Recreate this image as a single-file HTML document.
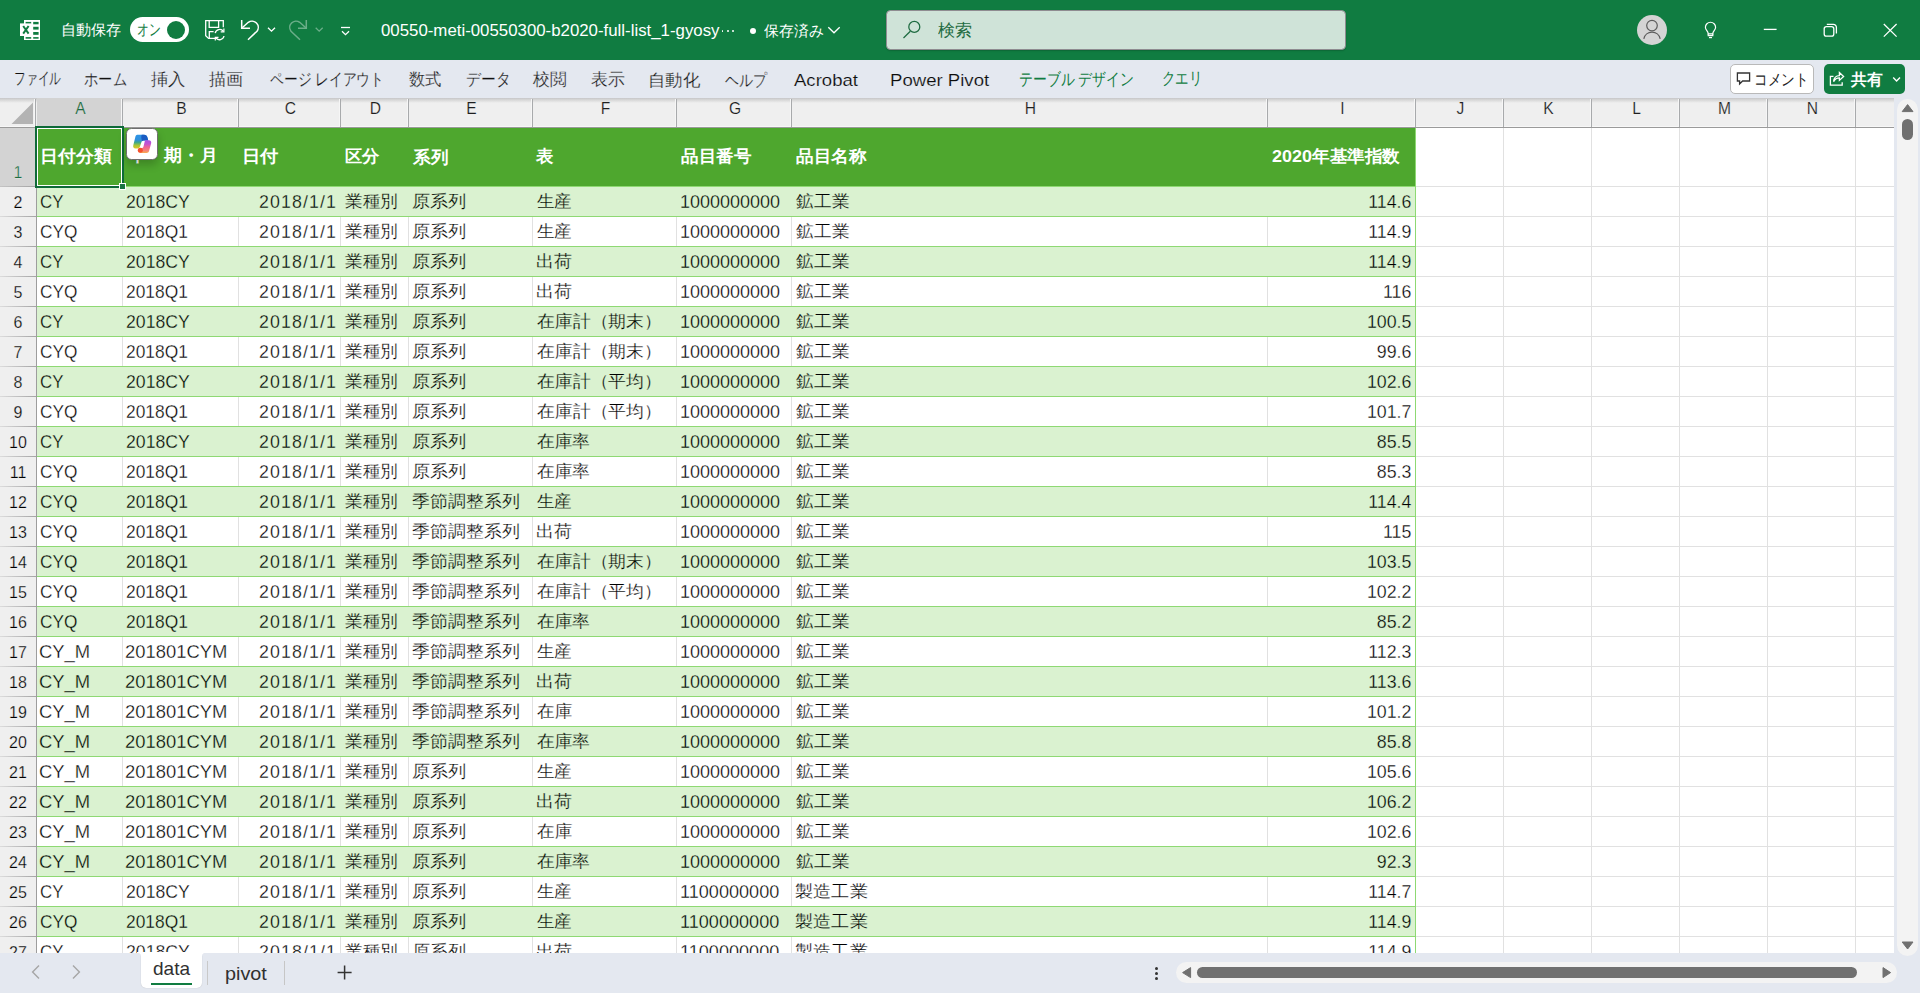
<!DOCTYPE html>
<html lang="ja"><head><meta charset="utf-8"><title>Excel</title>
<style>
html,body{margin:0;padding:0}
body{width:1920px;height:993px;overflow:hidden;position:relative;background:#fff;font-family:"Liberation Sans",sans-serif;color:#111}
div,span,svg{position:absolute;box-sizing:border-box}
.t{white-space:nowrap;line-height:1;transform-origin:0 50%}
#title{left:0;top:0;width:1920px;height:60px;background:#107c41}
#rib{left:0;top:60px;width:1920px;height:38px;background:#e4e8f0}
.tab{font-size:16.5px;color:#111;-webkit-text-stroke:.22px #e4e8f0}
.tab.g{color:#107c41;-webkit-text-stroke-width:0}
#sheet{left:0;top:98px;width:1894px;height:855px;background:#fff;overflow:hidden}
#colhdr{left:0;top:0;width:1894px;height:30px;background:#efefef;border-bottom:1px solid #9a9a9a}
.ch{top:0;height:29px;line-height:22px;text-align:center;font-size:15.6px;color:#000;-webkit-text-stroke:.15px #efefef;padding-left:2px}
.chl{top:1px;width:1px;height:28px;background:#a8aaac;box-shadow:-1px 0 0 #f6f6f6}
#rowhdr{left:0;top:30px;width:37px;height:825px;background:#efefef;border-right:1px solid #9d9d9d}
.rh{left:0;width:36px;height:30px;text-align:center;font-size:16px;color:#000;-webkit-text-stroke:.25px #efefef;line-height:31px;background:linear-gradient(90deg,#dcdcdc,#a4a4a4) bottom/100% 1px no-repeat}
.vl{width:1px;background:#e1e1e1}
.hl{height:1px;background:#e1e1e1}
.band{background:#daf2d0}
.tl{height:1px;background:#8ed973}
.c{font-size:17.8px;color:#000;-webkit-text-stroke:.3px #fff}
.c.bd{-webkit-text-stroke-color:#daf2d0}
.c.j{font-size:17px;color:#000;-webkit-text-stroke-width:.22px}
.h{font-weight:bold;color:#fff;font-size:17.4px}
#bot{left:0;top:953px;width:1920px;height:40px;background:#e4e8f0}
#vsb{left:1894px;top:98px;width:26px;height:860px;background:#e4e8f0;z-index:3}
</style></head><body>
<div id="title"><svg style="left:18px;top:18px" width="24" height="24" viewBox="18 18 24 24">
<rect x="24" y="20" width="16" height="20" fill="#fff"/>
<g fill="#107c41">
<rect x="25.6" y="21.9" width="5.6" height="2.4"/><rect x="33.2" y="21.9" width="5.4" height="2.4"/>
<rect x="33.2" y="26.8" width="5.4" height="2.8"/>
<rect x="33.2" y="32" width="5.4" height="2.8"/>
<rect x="25.6" y="37.1" width="5.6" height="1.6"/><rect x="33.2" y="37.1" width="5.4" height="1.6"/>
</g>
<rect x="20" y="23.4" width="11.8" height="12.6" fill="#fff"/>
<path d="M23.2 26 L28.6 33.6 M28.6 26 L23.2 33.6" stroke="#107c41" stroke-width="2" fill="none"/>
</svg><span class="t " style="left:60.78px;top:23.48px;transform:scaleX(1.0088);font-size:14.67px;color:#fff;width:60.02px;text-align-last:justify">自動保存</span><div style="left:130px;top:17px;width:59px;height:25px;border-radius:13px;background:#fff"></div><span class="t " style="left:136.59px;top:22.31px;transform:scaleX(0.7395);font-size:15.6px;color:#107c41;width:32.02px;text-align-last:justify">オン</span><div style="left:167px;top:21px;width:18px;height:18px;border-radius:9px;background:#107c41"></div><svg style="left:203px;top:18px" width="24" height="24" viewBox="203 18 24 24" fill="none" stroke="#fff" stroke-width="1.3">
<path d="M217.5 38.4 H208.6 L205.7 35.6 V20.7 H223.3 V27.2"/>
<path d="M209.2 20.7 V27.3 H218.6 V20.7"/>
<path d="M209.3 38.2 V31.6 H213.6"/>
<path d="M215.2 33.2 A4.6 4.6 0 0 1 223.4 31.3" /><path d="M223.9 28.6 V31.8 H220.7" stroke-width="1.2"/>
<path d="M224 36 A4.6 4.6 0 0 1 215.8 37.9" /><path d="M215.3 40.4 V37.3 H218.5" stroke-width="1.2"/>
</svg><svg style="left:238px;top:17px" width="40" height="26" viewBox="238 17 40 26" fill="none" stroke="#fff" stroke-width="1.5">
<path d="M241.7 20 V28.2 H250"/>
<path d="M242.2 27.7 L248.3 22.3 A6.3 6.3 0 0 1 257 31.2 L248 39.7"/>
<path d="M268 27.7 L271.5 31.2 L275 27.7" stroke-width="1.3"/>
</svg><svg style="left:286px;top:17px;opacity:.38" width="40" height="26" viewBox="286 17 40 26" fill="none" stroke="#fff" stroke-width="1.5">
<path d="M306.3 20 V28.2 H298"/>
<path d="M305.8 27.7 L299.7 22.3 A6.3 6.3 0 0 0 291 31.2 L300 39.7"/>
<path d="M315.7 27.7 L319.2 31.2 L322.7 27.7" stroke-width="1.3"/>
</svg><svg style="left:338px;top:22px" width="16" height="16" viewBox="338 22 16 16" fill="none" stroke="#fff" stroke-width="1.3">
<path d="M341 27.5 H350"/><path d="M342 31.2 L345.5 34.6 L349 31.2"/></svg><span class="t " style="left:381.15px;top:22.35px;transform:scaleX(1.0262);font-size:16.4px;color:#fff">00550-meti-00550300-b2020-full-list_1-gyosy</span><div style="left:721.55px;top:30px;width:1.9px;height:1.9px;border-radius:1px;background:#fff"></div><div style="left:726.65px;top:30px;width:1.9px;height:1.9px;border-radius:1px;background:#fff"></div><div style="left:731.75px;top:30px;width:1.9px;height:1.9px;border-radius:1px;background:#fff"></div><div style="left:750px;top:28px;width:6px;height:6px;border-radius:3px;background:#fff"></div><span class="t " style="left:763.63px;top:24.03px;transform:scaleX(0.9924);font-size:14.67px;color:#fff;width:60.02px;text-align-last:justify">保存済み</span><svg style="left:826px;top:24px" width="16" height="12" viewBox="826 24 16 12" fill="none" stroke="#fff" stroke-width="1.3"><path d="M828.3 27.2 L834 32.8 L839.7 27.2"/></svg><div style="left:886px;top:10px;width:460px;height:40px;border-radius:4.5px;background:#cfe3d8;border:1px solid #8f8c91;box-shadow:0 1px 1.5px rgba(0,0,0,.18)"></div><svg style="left:900px;top:18px" width="24" height="24" viewBox="900 18 24 24" fill="none" stroke="#1e6b41" stroke-width="1.25"><circle cx="914.3" cy="26.9" r="5.5"/><path d="M910.3 31.2 L903.5 38"/></svg><span class="t " style="left:938.1px;top:22.5px;transform:scaleX(1.0027);font-size:16.6px;color:#1e6b41;width:34.02px;text-align-last:justify">検索</span><svg style="left:1636px;top:14px" width="32" height="32" viewBox="1636 14 32 32"><circle cx="1652" cy="30" r="15" fill="#d4d4d4"/>
<g fill="none" stroke="#5c5c5c" stroke-width="1.2"><circle cx="1652" cy="25.6" r="5.3"/><path d="M1643.8 38.8 A8.4 8.4 0 0 1 1660.2 38.8"/></g></svg><svg style="left:1700px;top:18px" width="22" height="24" viewBox="1700 18 22 24" fill="none" stroke="#fff" stroke-width="1.2">
<path d="M1708.2 33.8 C1708.2 31 1705.4 30.3 1705.4 27.3 A5.1 5.1 0 0 1 1715.6 27.3 C1715.6 30.3 1712.8 31 1712.8 33.8 Z"/>
<path d="M1708.2 33.8 V35.7 H1712.8 V33.8"/><path d="M1709 37.6 H1712"/></svg><svg style="left:1760px;top:20px" width="20" height="20" viewBox="1760 20 20 20" stroke="#fff" stroke-width="1.3"><path d="M1763.8 29.4 H1776.6"/></svg><svg style="left:1820px;top:20px" width="20" height="20" viewBox="1820 20 20 20" fill="none" stroke="#fff" stroke-width="1.3">
<rect x="1824.2" y="26.6" width="9.6" height="9.6" rx="2.2"/><path d="M1826.8 24.4 H1833.4 A3 3 0 0 1 1836.4 27.4 V33.6"/></svg><svg style="left:1880px;top:20px" width="20" height="20" viewBox="1880 20 20 20" stroke="#fff" stroke-width="1.3"><path d="M1883.8 24 L1896.6 36.6 M1896.6 24 L1883.8 36.6"/></svg></div>
<div id="rib"><span class="t tab" style="left:13.57px;top:10.38px;transform:scaleX(0.6926);width:68.02px;text-align-last:justify">ファイル</span><span class="t tab" style="left:83.86px;top:10.97px;transform:scaleX(0.8384);width:51.02px;text-align-last:justify">ホーム</span><span class="t tab" style="left:151.19px;top:11.39px;transform:scaleX(1.0212);width:34.02px;text-align-last:justify">挿入</span><span class="t tab" style="left:209.35px;top:11.39px;transform:scaleX(1.0021);width:34.02px;text-align-last:justify">描画</span><span class="t tab" style="left:269.81px;top:10.69px;transform:scaleX(0.8106);width:140.61px;text-align-last:justify">ページ レイアウト</span><span class="t tab" style="left:408.89px;top:11.28px;transform:scaleX(0.9603);width:34.02px;text-align-last:justify">数式</span><span class="t tab" style="left:466.27px;top:11.0px;transform:scaleX(0.8716);width:51.02px;text-align-last:justify">データ</span><span class="t tab" style="left:533.18px;top:11.14px;transform:scaleX(0.9915);width:34.02px;text-align-last:justify">校閲</span><span class="t tab" style="left:590.74px;top:11.15px;transform:scaleX(0.994);width:34.02px;text-align-last:justify">表示</span><span class="t tab" style="left:647.81px;top:11.58px;transform:scaleX(1.0217);width:51.02px;text-align-last:justify">自動化</span><span class="t tab" style="left:724.89px;top:11.89px;transform:scaleX(0.8222);width:51.02px;text-align-last:justify">ヘルプ</span><span class="t tab" style="left:794.44px;top:11.65px;transform:scaleX(1.091);font-size:17px;color:#0c0c0c;-webkit-text-stroke-width:.16px">Acrobat</span><span class="t tab" style="left:890.22px;top:11.65px;transform:scaleX(1.0929);font-size:17px;color:#0c0c0c;-webkit-text-stroke-width:.16px">Power Pivot</span><span class="t tab g" style="left:1019.27px;top:11.27px;transform:scaleX(0.8145);width:140.61px;text-align-last:justify">テーブル デザイン</span><span class="t tab g" style="left:1161.89px;top:10.37px;transform:scaleX(0.7881);width:51.02px;text-align-last:justify">クエリ</span><div style="left:1730px;top:4px;width:84px;height:30px;border-radius:5px;background:#fff;border:1px solid #b9b9b9"></div><svg style="left:1734px;top:10px" width="20" height="18" viewBox="1734 70 20 18" fill="none" stroke="#333" stroke-width="1.3"><path d="M1737.4 73 H1749.6 V81 H1742.6 L1739.6 84 V81 H1737.4 Z"/></svg><span class="t " style="left:1753.83px;top:11.67px;transform:scaleX(0.8489);font-size:16px;color:#242424;width:64.02px;text-align-last:justify">コメント</span><div style="left:1824px;top:4px;width:81px;height:30px;border-radius:5px;background:#107c41"></div><svg style="left:1827px;top:9px" width="20" height="20" viewBox="1827 69 20 20" fill="none" stroke="#fff" stroke-width="1.3">
<path d="M1833.5 76.3 H1830.4 V85.2 H1842.2 V82.2"/>
<path d="M1833.6 81.6 C1834 77.6 1836.6 75.6 1839.4 75.6 V72.6 L1843.6 76.6 L1839.4 80.4 V77.9 C1837 77.9 1835 79 1833.6 81.6 Z"/></svg><span class="t " style="left:1850.7px;top:11.92px;transform:scaleX(0.9845);font-size:16px;font-weight:bold;color:#fff;width:32.02px;text-align-last:justify">共有</span><svg style="left:1890px;top:14px" width="14" height="10" viewBox="1890 74 14 10" fill="none" stroke="#fff" stroke-width="1.4"><path d="M1893.2 77.6 L1896.6 81 L1900 77.6"/></svg></div>
<div id="sheet"><div class="vl" style="left:122px;top:30px;height:825px"></div><div class="vl" style="left:238px;top:30px;height:825px"></div><div class="vl" style="left:340px;top:30px;height:825px"></div><div class="vl" style="left:408px;top:30px;height:825px"></div><div class="vl" style="left:532px;top:30px;height:825px"></div><div class="vl" style="left:676px;top:30px;height:825px"></div><div class="vl" style="left:791px;top:30px;height:825px"></div><div class="vl" style="left:1267px;top:30px;height:825px"></div><div class="vl" style="left:1415px;top:30px;height:825px"></div><div class="vl" style="left:1503px;top:30px;height:825px"></div><div class="vl" style="left:1591px;top:30px;height:825px"></div><div class="vl" style="left:1679px;top:30px;height:825px"></div><div class="vl" style="left:1767px;top:30px;height:825px"></div><div class="vl" style="left:1855px;top:30px;height:825px"></div><div class="hl" style="left:37px;top:88px;width:1857px"></div><div class="hl" style="left:37px;top:118px;width:1857px"></div><div class="hl" style="left:37px;top:148px;width:1857px"></div><div class="hl" style="left:37px;top:178px;width:1857px"></div><div class="hl" style="left:37px;top:208px;width:1857px"></div><div class="hl" style="left:37px;top:238px;width:1857px"></div><div class="hl" style="left:37px;top:268px;width:1857px"></div><div class="hl" style="left:37px;top:298px;width:1857px"></div><div class="hl" style="left:37px;top:328px;width:1857px"></div><div class="hl" style="left:37px;top:358px;width:1857px"></div><div class="hl" style="left:37px;top:388px;width:1857px"></div><div class="hl" style="left:37px;top:418px;width:1857px"></div><div class="hl" style="left:37px;top:448px;width:1857px"></div><div class="hl" style="left:37px;top:478px;width:1857px"></div><div class="hl" style="left:37px;top:508px;width:1857px"></div><div class="hl" style="left:37px;top:538px;width:1857px"></div><div class="hl" style="left:37px;top:568px;width:1857px"></div><div class="hl" style="left:37px;top:598px;width:1857px"></div><div class="hl" style="left:37px;top:628px;width:1857px"></div><div class="hl" style="left:37px;top:658px;width:1857px"></div><div class="hl" style="left:37px;top:688px;width:1857px"></div><div class="hl" style="left:37px;top:718px;width:1857px"></div><div class="hl" style="left:37px;top:748px;width:1857px"></div><div class="hl" style="left:37px;top:778px;width:1857px"></div><div class="hl" style="left:37px;top:808px;width:1857px"></div><div class="hl" style="left:37px;top:838px;width:1857px"></div><div class="hl" style="left:37px;top:868px;width:1857px"></div><div style="left:37px;top:30px;width:1379px;height:58px;background:#4ea72e"></div><div style="left:1415px;top:30px;width:1px;height:825px;background:#8ed973"></div><div class="tl" style="left:37px;top:88px;width:1379px"></div><div class="band" style="left:37px;top:89px;width:1378px;height:29px"></div><div class="tl" style="left:37px;top:118px;width:1379px"></div><div class="tl" style="left:37px;top:148px;width:1379px"></div><div class="band" style="left:37px;top:149px;width:1378px;height:29px"></div><div class="tl" style="left:37px;top:178px;width:1379px"></div><div class="tl" style="left:37px;top:208px;width:1379px"></div><div class="band" style="left:37px;top:209px;width:1378px;height:29px"></div><div class="tl" style="left:37px;top:238px;width:1379px"></div><div class="tl" style="left:37px;top:268px;width:1379px"></div><div class="band" style="left:37px;top:269px;width:1378px;height:29px"></div><div class="tl" style="left:37px;top:298px;width:1379px"></div><div class="tl" style="left:37px;top:328px;width:1379px"></div><div class="band" style="left:37px;top:329px;width:1378px;height:29px"></div><div class="tl" style="left:37px;top:358px;width:1379px"></div><div class="tl" style="left:37px;top:388px;width:1379px"></div><div class="band" style="left:37px;top:389px;width:1378px;height:29px"></div><div class="tl" style="left:37px;top:418px;width:1379px"></div><div class="tl" style="left:37px;top:448px;width:1379px"></div><div class="band" style="left:37px;top:449px;width:1378px;height:29px"></div><div class="tl" style="left:37px;top:478px;width:1379px"></div><div class="tl" style="left:37px;top:508px;width:1379px"></div><div class="band" style="left:37px;top:509px;width:1378px;height:29px"></div><div class="tl" style="left:37px;top:538px;width:1379px"></div><div class="tl" style="left:37px;top:568px;width:1379px"></div><div class="band" style="left:37px;top:569px;width:1378px;height:29px"></div><div class="tl" style="left:37px;top:598px;width:1379px"></div><div class="tl" style="left:37px;top:628px;width:1379px"></div><div class="band" style="left:37px;top:629px;width:1378px;height:29px"></div><div class="tl" style="left:37px;top:658px;width:1379px"></div><div class="tl" style="left:37px;top:688px;width:1379px"></div><div class="band" style="left:37px;top:689px;width:1378px;height:29px"></div><div class="tl" style="left:37px;top:718px;width:1379px"></div><div class="tl" style="left:37px;top:748px;width:1379px"></div><div class="band" style="left:37px;top:749px;width:1378px;height:29px"></div><div class="tl" style="left:37px;top:778px;width:1379px"></div><div class="tl" style="left:37px;top:808px;width:1379px"></div><div class="band" style="left:37px;top:809px;width:1378px;height:29px"></div><div class="tl" style="left:37px;top:838px;width:1379px"></div><div class="tl" style="left:37px;top:868px;width:1379px"></div><span class="t h" style="left:39.9px;top:49.86px;transform:scaleX(1.0509);width:68.02px;text-align-last:justify">日付分類</span><span class="t h" style="left:127.54px;top:49.43px;transform:scaleX(1.0523);width:85.02px;text-align-last:justify">年・期・月</span><span class="t h" style="left:242.31px;top:49.98px;transform:scaleX(1.0748);width:34.02px;text-align-last:justify">日付</span><span class="t h" style="left:344.72px;top:50.17px;transform:scaleX(1.0106);width:34.02px;text-align-last:justify">区分</span><span class="t h" style="left:412.76px;top:50.67px;transform:scaleX(1.0333);width:34.02px;text-align-last:justify">系列</span><span class="t h" style="left:536.35px;top:50.23px;transform:scaleX(1.0177);">表</span><span class="t h" style="left:680.91px;top:50.11px;transform:scaleX(1.0312);width:68.02px;text-align-last:justify">品目番号</span><span class="t h" style="left:796.18px;top:49.88px;transform:scaleX(1.0355);width:68.02px;text-align-last:justify">品目名称</span><span class="t h" style="left:1271.95px;top:49.63px;transform:scaleX(1.0339);width:123.71px;text-align-last:justify">2020年基準指数</span><span class="t c bd" style="left:39.77px;top:95.6px;transform:scaleX(0.9478);">CY</span><span class="t c bd" style="left:126.07px;top:95.6px;transform:scaleX(0.9923);">2018CY</span><span class="t c bd" style="left:258.99px;top:95.6px;letter-spacing:1.109px;">2018/1/1</span><span class="t c j bd" style="left:345.16px;top:94.91px;transform:scaleX(1.0402);width:51.02px;text-align-last:justify">業種別</span><span class="t c j bd" style="left:412.06px;top:94.91px;transform:scaleX(1.0695);width:51.02px;text-align-last:justify">原系列</span><span class="t c j bd" style="left:537.12px;top:94.91px;transform:scaleX(1.0284);width:34.02px;text-align-last:justify">生産</span><span class="t c bd" style="left:679.79px;top:95.6px;transform:scaleX(1.0116);">1000000000</span><span class="t c j bd" style="left:795.6px;top:94.91px;transform:scaleX(1.0442);width:51.02px;text-align-last:justify">鉱工業</span><span class="t c bd" style="right:482.6px;top:95.6px;transform-origin:100% 50%">114.6</span><span class="t c" style="left:39.97px;top:125.6px;transform:scaleX(0.97);">CYQ</span><span class="t c" style="left:125.73px;top:125.6px;transform:scaleX(0.9779);">2018Q1</span><span class="t c" style="left:258.99px;top:125.6px;letter-spacing:1.109px;">2018/1/1</span><span class="t c j" style="left:345.16px;top:124.91px;transform:scaleX(1.0402);width:51.02px;text-align-last:justify">業種別</span><span class="t c j" style="left:412.06px;top:124.91px;transform:scaleX(1.0695);width:51.02px;text-align-last:justify">原系列</span><span class="t c j" style="left:537.12px;top:124.91px;transform:scaleX(1.0284);width:34.02px;text-align-last:justify">生産</span><span class="t c" style="left:679.79px;top:125.6px;transform:scaleX(1.0116);">1000000000</span><span class="t c j" style="left:795.6px;top:124.91px;transform:scaleX(1.0442);width:51.02px;text-align-last:justify">鉱工業</span><span class="t c" style="right:482.6px;top:125.6px;transform-origin:100% 50%">114.9</span><span class="t c bd" style="left:39.77px;top:155.6px;transform:scaleX(0.9478);">CY</span><span class="t c bd" style="left:126.07px;top:155.6px;transform:scaleX(0.9923);">2018CY</span><span class="t c bd" style="left:258.99px;top:155.6px;letter-spacing:1.109px;">2018/1/1</span><span class="t c j bd" style="left:345.16px;top:154.91px;transform:scaleX(1.0402);width:51.02px;text-align-last:justify">業種別</span><span class="t c j bd" style="left:412.06px;top:154.91px;transform:scaleX(1.0695);width:51.02px;text-align-last:justify">原系列</span><span class="t c j bd" style="left:536.44px;top:154.91px;transform:scaleX(1.0618);width:34.02px;text-align-last:justify">出荷</span><span class="t c bd" style="left:679.79px;top:155.6px;transform:scaleX(1.0116);">1000000000</span><span class="t c j bd" style="left:795.6px;top:154.91px;transform:scaleX(1.0442);width:51.02px;text-align-last:justify">鉱工業</span><span class="t c bd" style="right:482.6px;top:155.6px;transform-origin:100% 50%">114.9</span><span class="t c" style="left:39.97px;top:185.6px;transform:scaleX(0.97);">CYQ</span><span class="t c" style="left:125.73px;top:185.6px;transform:scaleX(0.9779);">2018Q1</span><span class="t c" style="left:258.99px;top:185.6px;letter-spacing:1.109px;">2018/1/1</span><span class="t c j" style="left:345.16px;top:184.91px;transform:scaleX(1.0402);width:51.02px;text-align-last:justify">業種別</span><span class="t c j" style="left:412.06px;top:184.91px;transform:scaleX(1.0695);width:51.02px;text-align-last:justify">原系列</span><span class="t c j" style="left:536.44px;top:184.91px;transform:scaleX(1.0618);width:34.02px;text-align-last:justify">出荷</span><span class="t c" style="left:679.79px;top:185.6px;transform:scaleX(1.0116);">1000000000</span><span class="t c j" style="left:795.6px;top:184.91px;transform:scaleX(1.0442);width:51.02px;text-align-last:justify">鉱工業</span><span class="t c" style="right:482.6px;top:185.6px;transform-origin:100% 50%">116</span><span class="t c bd" style="left:39.77px;top:215.6px;transform:scaleX(0.9478);">CY</span><span class="t c bd" style="left:126.07px;top:215.6px;transform:scaleX(0.9923);">2018CY</span><span class="t c bd" style="left:258.99px;top:215.6px;letter-spacing:1.109px;">2018/1/1</span><span class="t c j bd" style="left:345.16px;top:214.91px;transform:scaleX(1.0402);width:51.02px;text-align-last:justify">業種別</span><span class="t c j bd" style="left:412.06px;top:214.91px;transform:scaleX(1.0695);width:51.02px;text-align-last:justify">原系列</span><span class="t c j bd" style="left:536.55px;top:214.91px;transform:scaleX(1.0493);width:119.02px;text-align-last:justify">在庫計（期末）</span><span class="t c bd" style="left:679.79px;top:215.6px;transform:scaleX(1.0116);">1000000000</span><span class="t c j bd" style="left:795.6px;top:214.91px;transform:scaleX(1.0442);width:51.02px;text-align-last:justify">鉱工業</span><span class="t c bd" style="right:482.6px;top:215.6px;transform-origin:100% 50%">100.5</span><span class="t c" style="left:39.97px;top:245.6px;transform:scaleX(0.97);">CYQ</span><span class="t c" style="left:125.73px;top:245.6px;transform:scaleX(0.9779);">2018Q1</span><span class="t c" style="left:258.99px;top:245.6px;letter-spacing:1.109px;">2018/1/1</span><span class="t c j" style="left:345.16px;top:244.91px;transform:scaleX(1.0402);width:51.02px;text-align-last:justify">業種別</span><span class="t c j" style="left:412.06px;top:244.91px;transform:scaleX(1.0695);width:51.02px;text-align-last:justify">原系列</span><span class="t c j" style="left:536.55px;top:244.91px;transform:scaleX(1.0493);width:119.02px;text-align-last:justify">在庫計（期末）</span><span class="t c" style="left:679.79px;top:245.6px;transform:scaleX(1.0116);">1000000000</span><span class="t c j" style="left:795.6px;top:244.91px;transform:scaleX(1.0442);width:51.02px;text-align-last:justify">鉱工業</span><span class="t c" style="right:482.6px;top:245.6px;transform-origin:100% 50%">99.6</span><span class="t c bd" style="left:39.77px;top:275.6px;transform:scaleX(0.9478);">CY</span><span class="t c bd" style="left:126.07px;top:275.6px;transform:scaleX(0.9923);">2018CY</span><span class="t c bd" style="left:258.99px;top:275.6px;letter-spacing:1.109px;">2018/1/1</span><span class="t c j bd" style="left:345.16px;top:274.91px;transform:scaleX(1.0402);width:51.02px;text-align-last:justify">業種別</span><span class="t c j bd" style="left:412.06px;top:274.91px;transform:scaleX(1.0695);width:51.02px;text-align-last:justify">原系列</span><span class="t c j bd" style="left:536.55px;top:274.91px;transform:scaleX(1.0493);width:119.02px;text-align-last:justify">在庫計（平均）</span><span class="t c bd" style="left:679.79px;top:275.6px;transform:scaleX(1.0116);">1000000000</span><span class="t c j bd" style="left:795.6px;top:274.91px;transform:scaleX(1.0442);width:51.02px;text-align-last:justify">鉱工業</span><span class="t c bd" style="right:482.6px;top:275.6px;transform-origin:100% 50%">102.6</span><span class="t c" style="left:39.97px;top:305.6px;transform:scaleX(0.97);">CYQ</span><span class="t c" style="left:125.73px;top:305.6px;transform:scaleX(0.9779);">2018Q1</span><span class="t c" style="left:258.99px;top:305.6px;letter-spacing:1.109px;">2018/1/1</span><span class="t c j" style="left:345.16px;top:304.91px;transform:scaleX(1.0402);width:51.02px;text-align-last:justify">業種別</span><span class="t c j" style="left:412.06px;top:304.91px;transform:scaleX(1.0695);width:51.02px;text-align-last:justify">原系列</span><span class="t c j" style="left:536.55px;top:304.91px;transform:scaleX(1.0493);width:119.02px;text-align-last:justify">在庫計（平均）</span><span class="t c" style="left:679.79px;top:305.6px;transform:scaleX(1.0116);">1000000000</span><span class="t c j" style="left:795.6px;top:304.91px;transform:scaleX(1.0442);width:51.02px;text-align-last:justify">鉱工業</span><span class="t c" style="right:482.6px;top:305.6px;transform-origin:100% 50%">101.7</span><span class="t c bd" style="left:39.77px;top:335.6px;transform:scaleX(0.9478);">CY</span><span class="t c bd" style="left:126.07px;top:335.6px;transform:scaleX(0.9923);">2018CY</span><span class="t c bd" style="left:258.99px;top:335.6px;letter-spacing:1.109px;">2018/1/1</span><span class="t c j bd" style="left:345.16px;top:334.91px;transform:scaleX(1.0402);width:51.02px;text-align-last:justify">業種別</span><span class="t c j bd" style="left:412.06px;top:334.91px;transform:scaleX(1.0695);width:51.02px;text-align-last:justify">原系列</span><span class="t c j bd" style="left:536.56px;top:334.91px;transform:scaleX(1.0425);width:51.02px;text-align-last:justify">在庫率</span><span class="t c bd" style="left:679.79px;top:335.6px;transform:scaleX(1.0116);">1000000000</span><span class="t c j bd" style="left:795.6px;top:334.91px;transform:scaleX(1.0442);width:51.02px;text-align-last:justify">鉱工業</span><span class="t c bd" style="right:482.6px;top:335.6px;transform-origin:100% 50%">85.5</span><span class="t c" style="left:39.97px;top:365.6px;transform:scaleX(0.97);">CYQ</span><span class="t c" style="left:125.73px;top:365.6px;transform:scaleX(0.9779);">2018Q1</span><span class="t c" style="left:258.99px;top:365.6px;letter-spacing:1.109px;">2018/1/1</span><span class="t c j" style="left:345.16px;top:364.91px;transform:scaleX(1.0402);width:51.02px;text-align-last:justify">業種別</span><span class="t c j" style="left:412.06px;top:364.91px;transform:scaleX(1.0695);width:51.02px;text-align-last:justify">原系列</span><span class="t c j" style="left:536.56px;top:364.91px;transform:scaleX(1.0425);width:51.02px;text-align-last:justify">在庫率</span><span class="t c" style="left:679.79px;top:365.6px;transform:scaleX(1.0116);">1000000000</span><span class="t c j" style="left:795.6px;top:364.91px;transform:scaleX(1.0442);width:51.02px;text-align-last:justify">鉱工業</span><span class="t c" style="right:482.6px;top:365.6px;transform-origin:100% 50%">85.3</span><span class="t c bd" style="left:39.97px;top:395.6px;transform:scaleX(0.97);">CYQ</span><span class="t c bd" style="left:125.73px;top:395.6px;transform:scaleX(0.9779);">2018Q1</span><span class="t c bd" style="left:258.99px;top:395.6px;letter-spacing:1.109px;">2018/1/1</span><span class="t c j bd" style="left:345.16px;top:394.91px;transform:scaleX(1.0402);width:51.02px;text-align-last:justify">業種別</span><span class="t c j bd" style="left:412.23px;top:394.91px;transform:scaleX(1.0548);width:102.02px;text-align-last:justify">季節調整系列</span><span class="t c j bd" style="left:537.12px;top:394.91px;transform:scaleX(1.0284);width:34.02px;text-align-last:justify">生産</span><span class="t c bd" style="left:679.79px;top:395.6px;transform:scaleX(1.0116);">1000000000</span><span class="t c j bd" style="left:795.6px;top:394.91px;transform:scaleX(1.0442);width:51.02px;text-align-last:justify">鉱工業</span><span class="t c bd" style="right:482.6px;top:395.6px;transform-origin:100% 50%">114.4</span><span class="t c" style="left:39.97px;top:425.6px;transform:scaleX(0.97);">CYQ</span><span class="t c" style="left:125.73px;top:425.6px;transform:scaleX(0.9779);">2018Q1</span><span class="t c" style="left:258.99px;top:425.6px;letter-spacing:1.109px;">2018/1/1</span><span class="t c j" style="left:345.16px;top:424.91px;transform:scaleX(1.0402);width:51.02px;text-align-last:justify">業種別</span><span class="t c j" style="left:412.23px;top:424.91px;transform:scaleX(1.0548);width:102.02px;text-align-last:justify">季節調整系列</span><span class="t c j" style="left:536.44px;top:424.91px;transform:scaleX(1.0618);width:34.02px;text-align-last:justify">出荷</span><span class="t c" style="left:679.79px;top:425.6px;transform:scaleX(1.0116);">1000000000</span><span class="t c j" style="left:795.6px;top:424.91px;transform:scaleX(1.0442);width:51.02px;text-align-last:justify">鉱工業</span><span class="t c" style="right:482.6px;top:425.6px;transform-origin:100% 50%">115</span><span class="t c bd" style="left:39.97px;top:455.6px;transform:scaleX(0.97);">CYQ</span><span class="t c bd" style="left:125.73px;top:455.6px;transform:scaleX(0.9779);">2018Q1</span><span class="t c bd" style="left:258.99px;top:455.6px;letter-spacing:1.109px;">2018/1/1</span><span class="t c j bd" style="left:345.16px;top:454.91px;transform:scaleX(1.0402);width:51.02px;text-align-last:justify">業種別</span><span class="t c j bd" style="left:412.23px;top:454.91px;transform:scaleX(1.0548);width:102.02px;text-align-last:justify">季節調整系列</span><span class="t c j bd" style="left:536.55px;top:454.91px;transform:scaleX(1.0493);width:119.02px;text-align-last:justify">在庫計（期末）</span><span class="t c bd" style="left:679.79px;top:455.6px;transform:scaleX(1.0116);">1000000000</span><span class="t c j bd" style="left:795.6px;top:454.91px;transform:scaleX(1.0442);width:51.02px;text-align-last:justify">鉱工業</span><span class="t c bd" style="right:482.6px;top:455.6px;transform-origin:100% 50%">103.5</span><span class="t c" style="left:39.97px;top:485.6px;transform:scaleX(0.97);">CYQ</span><span class="t c" style="left:125.73px;top:485.6px;transform:scaleX(0.9779);">2018Q1</span><span class="t c" style="left:258.99px;top:485.6px;letter-spacing:1.109px;">2018/1/1</span><span class="t c j" style="left:345.16px;top:484.91px;transform:scaleX(1.0402);width:51.02px;text-align-last:justify">業種別</span><span class="t c j" style="left:412.23px;top:484.91px;transform:scaleX(1.0548);width:102.02px;text-align-last:justify">季節調整系列</span><span class="t c j" style="left:536.55px;top:484.91px;transform:scaleX(1.0493);width:119.02px;text-align-last:justify">在庫計（平均）</span><span class="t c" style="left:679.79px;top:485.6px;transform:scaleX(1.0116);">1000000000</span><span class="t c j" style="left:795.6px;top:484.91px;transform:scaleX(1.0442);width:51.02px;text-align-last:justify">鉱工業</span><span class="t c" style="right:482.6px;top:485.6px;transform-origin:100% 50%">102.2</span><span class="t c bd" style="left:39.97px;top:515.6px;transform:scaleX(0.97);">CYQ</span><span class="t c bd" style="left:125.73px;top:515.6px;transform:scaleX(0.9779);">2018Q1</span><span class="t c bd" style="left:258.99px;top:515.6px;letter-spacing:1.109px;">2018/1/1</span><span class="t c j bd" style="left:345.16px;top:514.91px;transform:scaleX(1.0402);width:51.02px;text-align-last:justify">業種別</span><span class="t c j bd" style="left:412.23px;top:514.91px;transform:scaleX(1.0548);width:102.02px;text-align-last:justify">季節調整系列</span><span class="t c j bd" style="left:536.56px;top:514.91px;transform:scaleX(1.0425);width:51.02px;text-align-last:justify">在庫率</span><span class="t c bd" style="left:679.79px;top:515.6px;transform:scaleX(1.0116);">1000000000</span><span class="t c j bd" style="left:795.6px;top:514.91px;transform:scaleX(1.0442);width:51.02px;text-align-last:justify">鉱工業</span><span class="t c bd" style="right:482.6px;top:515.6px;transform-origin:100% 50%">85.2</span><span class="t c" style="left:39.1px;top:545.6px;transform:scaleX(1.0358);">CY_M</span><span class="t c" style="left:125.22px;top:545.6px;transform:scaleX(1.0349);">201801CYM</span><span class="t c" style="left:258.99px;top:545.6px;letter-spacing:1.109px;">2018/1/1</span><span class="t c j" style="left:345.16px;top:544.91px;transform:scaleX(1.0402);width:51.02px;text-align-last:justify">業種別</span><span class="t c j" style="left:412.23px;top:544.91px;transform:scaleX(1.0548);width:102.02px;text-align-last:justify">季節調整系列</span><span class="t c j" style="left:537.12px;top:544.91px;transform:scaleX(1.0284);width:34.02px;text-align-last:justify">生産</span><span class="t c" style="left:679.79px;top:545.6px;transform:scaleX(1.0116);">1000000000</span><span class="t c j" style="left:795.6px;top:544.91px;transform:scaleX(1.0442);width:51.02px;text-align-last:justify">鉱工業</span><span class="t c" style="right:482.6px;top:545.6px;transform-origin:100% 50%">112.3</span><span class="t c bd" style="left:39.1px;top:575.6px;transform:scaleX(1.0358);">CY_M</span><span class="t c bd" style="left:125.22px;top:575.6px;transform:scaleX(1.0349);">201801CYM</span><span class="t c bd" style="left:258.99px;top:575.6px;letter-spacing:1.109px;">2018/1/1</span><span class="t c j bd" style="left:345.16px;top:574.91px;transform:scaleX(1.0402);width:51.02px;text-align-last:justify">業種別</span><span class="t c j bd" style="left:412.23px;top:574.91px;transform:scaleX(1.0548);width:102.02px;text-align-last:justify">季節調整系列</span><span class="t c j bd" style="left:536.44px;top:574.91px;transform:scaleX(1.0618);width:34.02px;text-align-last:justify">出荷</span><span class="t c bd" style="left:679.79px;top:575.6px;transform:scaleX(1.0116);">1000000000</span><span class="t c j bd" style="left:795.6px;top:574.91px;transform:scaleX(1.0442);width:51.02px;text-align-last:justify">鉱工業</span><span class="t c bd" style="right:482.6px;top:575.6px;transform-origin:100% 50%">113.6</span><span class="t c" style="left:39.1px;top:605.6px;transform:scaleX(1.0358);">CY_M</span><span class="t c" style="left:125.22px;top:605.6px;transform:scaleX(1.0349);">201801CYM</span><span class="t c" style="left:258.99px;top:605.6px;letter-spacing:1.109px;">2018/1/1</span><span class="t c j" style="left:345.16px;top:604.91px;transform:scaleX(1.0402);width:51.02px;text-align-last:justify">業種別</span><span class="t c j" style="left:412.23px;top:604.91px;transform:scaleX(1.0548);width:102.02px;text-align-last:justify">季節調整系列</span><span class="t c j" style="left:537.13px;top:604.91px;transform:scaleX(1.0307);width:34.02px;text-align-last:justify">在庫</span><span class="t c" style="left:679.79px;top:605.6px;transform:scaleX(1.0116);">1000000000</span><span class="t c j" style="left:795.6px;top:604.91px;transform:scaleX(1.0442);width:51.02px;text-align-last:justify">鉱工業</span><span class="t c" style="right:482.6px;top:605.6px;transform-origin:100% 50%">101.2</span><span class="t c bd" style="left:39.1px;top:635.6px;transform:scaleX(1.0358);">CY_M</span><span class="t c bd" style="left:125.22px;top:635.6px;transform:scaleX(1.0349);">201801CYM</span><span class="t c bd" style="left:258.99px;top:635.6px;letter-spacing:1.109px;">2018/1/1</span><span class="t c j bd" style="left:345.16px;top:634.91px;transform:scaleX(1.0402);width:51.02px;text-align-last:justify">業種別</span><span class="t c j bd" style="left:412.23px;top:634.91px;transform:scaleX(1.0548);width:102.02px;text-align-last:justify">季節調整系列</span><span class="t c j bd" style="left:536.56px;top:634.91px;transform:scaleX(1.0425);width:51.02px;text-align-last:justify">在庫率</span><span class="t c bd" style="left:679.79px;top:635.6px;transform:scaleX(1.0116);">1000000000</span><span class="t c j bd" style="left:795.6px;top:634.91px;transform:scaleX(1.0442);width:51.02px;text-align-last:justify">鉱工業</span><span class="t c bd" style="right:482.6px;top:635.6px;transform-origin:100% 50%">85.8</span><span class="t c" style="left:39.1px;top:665.6px;transform:scaleX(1.0358);">CY_M</span><span class="t c" style="left:125.22px;top:665.6px;transform:scaleX(1.0349);">201801CYM</span><span class="t c" style="left:258.99px;top:665.6px;letter-spacing:1.109px;">2018/1/1</span><span class="t c j" style="left:345.16px;top:664.91px;transform:scaleX(1.0402);width:51.02px;text-align-last:justify">業種別</span><span class="t c j" style="left:412.06px;top:664.91px;transform:scaleX(1.0695);width:51.02px;text-align-last:justify">原系列</span><span class="t c j" style="left:537.12px;top:664.91px;transform:scaleX(1.0284);width:34.02px;text-align-last:justify">生産</span><span class="t c" style="left:679.79px;top:665.6px;transform:scaleX(1.0116);">1000000000</span><span class="t c j" style="left:795.6px;top:664.91px;transform:scaleX(1.0442);width:51.02px;text-align-last:justify">鉱工業</span><span class="t c" style="right:482.6px;top:665.6px;transform-origin:100% 50%">105.6</span><span class="t c bd" style="left:39.1px;top:695.6px;transform:scaleX(1.0358);">CY_M</span><span class="t c bd" style="left:125.22px;top:695.6px;transform:scaleX(1.0349);">201801CYM</span><span class="t c bd" style="left:258.99px;top:695.6px;letter-spacing:1.109px;">2018/1/1</span><span class="t c j bd" style="left:345.16px;top:694.91px;transform:scaleX(1.0402);width:51.02px;text-align-last:justify">業種別</span><span class="t c j bd" style="left:412.06px;top:694.91px;transform:scaleX(1.0695);width:51.02px;text-align-last:justify">原系列</span><span class="t c j bd" style="left:536.44px;top:694.91px;transform:scaleX(1.0618);width:34.02px;text-align-last:justify">出荷</span><span class="t c bd" style="left:679.79px;top:695.6px;transform:scaleX(1.0116);">1000000000</span><span class="t c j bd" style="left:795.6px;top:694.91px;transform:scaleX(1.0442);width:51.02px;text-align-last:justify">鉱工業</span><span class="t c bd" style="right:482.6px;top:695.6px;transform-origin:100% 50%">106.2</span><span class="t c" style="left:39.1px;top:725.6px;transform:scaleX(1.0358);">CY_M</span><span class="t c" style="left:125.22px;top:725.6px;transform:scaleX(1.0349);">201801CYM</span><span class="t c" style="left:258.99px;top:725.6px;letter-spacing:1.109px;">2018/1/1</span><span class="t c j" style="left:345.16px;top:724.91px;transform:scaleX(1.0402);width:51.02px;text-align-last:justify">業種別</span><span class="t c j" style="left:412.06px;top:724.91px;transform:scaleX(1.0695);width:51.02px;text-align-last:justify">原系列</span><span class="t c j" style="left:537.13px;top:724.91px;transform:scaleX(1.0307);width:34.02px;text-align-last:justify">在庫</span><span class="t c" style="left:679.79px;top:725.6px;transform:scaleX(1.0116);">1000000000</span><span class="t c j" style="left:795.6px;top:724.91px;transform:scaleX(1.0442);width:51.02px;text-align-last:justify">鉱工業</span><span class="t c" style="right:482.6px;top:725.6px;transform-origin:100% 50%">102.6</span><span class="t c bd" style="left:39.1px;top:755.6px;transform:scaleX(1.0358);">CY_M</span><span class="t c bd" style="left:125.22px;top:755.6px;transform:scaleX(1.0349);">201801CYM</span><span class="t c bd" style="left:258.99px;top:755.6px;letter-spacing:1.109px;">2018/1/1</span><span class="t c j bd" style="left:345.16px;top:754.91px;transform:scaleX(1.0402);width:51.02px;text-align-last:justify">業種別</span><span class="t c j bd" style="left:412.06px;top:754.91px;transform:scaleX(1.0695);width:51.02px;text-align-last:justify">原系列</span><span class="t c j bd" style="left:536.56px;top:754.91px;transform:scaleX(1.0425);width:51.02px;text-align-last:justify">在庫率</span><span class="t c bd" style="left:679.79px;top:755.6px;transform:scaleX(1.0116);">1000000000</span><span class="t c j bd" style="left:795.6px;top:754.91px;transform:scaleX(1.0442);width:51.02px;text-align-last:justify">鉱工業</span><span class="t c bd" style="right:482.6px;top:755.6px;transform-origin:100% 50%">92.3</span><span class="t c" style="left:39.77px;top:785.6px;transform:scaleX(0.9478);">CY</span><span class="t c" style="left:126.07px;top:785.6px;transform:scaleX(0.9923);">2018CY</span><span class="t c" style="left:258.99px;top:785.6px;letter-spacing:1.109px;">2018/1/1</span><span class="t c j" style="left:345.16px;top:784.91px;transform:scaleX(1.0402);width:51.02px;text-align-last:justify">業種別</span><span class="t c j" style="left:412.06px;top:784.91px;transform:scaleX(1.0695);width:51.02px;text-align-last:justify">原系列</span><span class="t c j" style="left:537.12px;top:784.91px;transform:scaleX(1.0284);width:34.02px;text-align-last:justify">生産</span><span class="t c" style="left:680.27px;top:785.6px;transform:scaleX(1.0172);">1100000000</span><span class="t c j" style="left:794.57px;top:784.91px;transform:scaleX(1.0708);width:68.02px;text-align-last:justify">製造工業</span><span class="t c" style="right:482.6px;top:785.6px;transform-origin:100% 50%">114.7</span><span class="t c bd" style="left:39.97px;top:815.6px;transform:scaleX(0.97);">CYQ</span><span class="t c bd" style="left:125.73px;top:815.6px;transform:scaleX(0.9779);">2018Q1</span><span class="t c bd" style="left:258.99px;top:815.6px;letter-spacing:1.109px;">2018/1/1</span><span class="t c j bd" style="left:345.16px;top:814.91px;transform:scaleX(1.0402);width:51.02px;text-align-last:justify">業種別</span><span class="t c j bd" style="left:412.06px;top:814.91px;transform:scaleX(1.0695);width:51.02px;text-align-last:justify">原系列</span><span class="t c j bd" style="left:537.12px;top:814.91px;transform:scaleX(1.0284);width:34.02px;text-align-last:justify">生産</span><span class="t c bd" style="left:680.27px;top:815.6px;transform:scaleX(1.0172);">1100000000</span><span class="t c j bd" style="left:794.57px;top:814.91px;transform:scaleX(1.0708);width:68.02px;text-align-last:justify">製造工業</span><span class="t c bd" style="right:482.6px;top:815.6px;transform-origin:100% 50%">114.9</span><span class="t c" style="left:39.77px;top:845.6px;transform:scaleX(0.9478);">CY</span><span class="t c" style="left:126.07px;top:845.6px;transform:scaleX(0.9923);">2018CY</span><span class="t c" style="left:258.99px;top:845.6px;letter-spacing:1.109px;">2018/1/1</span><span class="t c j" style="left:345.16px;top:844.91px;transform:scaleX(1.0402);width:51.02px;text-align-last:justify">業種別</span><span class="t c j" style="left:412.06px;top:844.91px;transform:scaleX(1.0695);width:51.02px;text-align-last:justify">原系列</span><span class="t c j" style="left:536.44px;top:844.91px;transform:scaleX(1.0618);width:34.02px;text-align-last:justify">出荷</span><span class="t c" style="left:680.27px;top:845.6px;transform:scaleX(1.0172);">1100000000</span><span class="t c j" style="left:794.57px;top:844.91px;transform:scaleX(1.0708);width:68.02px;text-align-last:justify">製造工業</span><span class="t c" style="right:482.6px;top:845.6px;transform-origin:100% 50%">114.9</span><div id="colhdr"><div style="left:0;top:0;width:1894px;height:5px;background:linear-gradient(#c6c6c8,#d6d6d6 35%,#efefef)"></div><div style="left:0;top:28px;width:1894px;height:1px;background:#f7f7f7"></div><div style="left:37px;top:0;width:86px;height:28px;background:#d3d3d3"></div><svg style="left:10px;top:3px" width="25" height="25" viewBox="10 101 25 25"><path d="M33 102.5 V124 H11.5 Z" fill="#b3b3b3"/></svg><div class="chl" style="left:35px"></div><span class="ch" style="left:37px;width:85px;color:#1e6b41">A</span><div class="chl" style="left:122px"></div><span class="ch" style="left:123px;width:115px;color:#1f1f1f">B</span><div class="chl" style="left:238px"></div><span class="ch" style="left:239px;width:101px;color:#1f1f1f">C</span><div class="chl" style="left:340px"></div><span class="ch" style="left:341px;width:67px;color:#1f1f1f">D</span><div class="chl" style="left:408px"></div><span class="ch" style="left:409px;width:123px;color:#1f1f1f">E</span><div class="chl" style="left:532px"></div><span class="ch" style="left:533px;width:143px;color:#1f1f1f">F</span><div class="chl" style="left:676px"></div><span class="ch" style="left:677px;width:114px;color:#1f1f1f">G</span><div class="chl" style="left:791px"></div><span class="ch" style="left:792px;width:475px;color:#1f1f1f">H</span><div class="chl" style="left:1267px"></div><span class="ch" style="left:1268px;width:147px;color:#1f1f1f">I</span><div class="chl" style="left:1415px"></div><span class="ch" style="left:1416px;width:87px;color:#1f1f1f">J</span><div class="chl" style="left:1503px"></div><span class="ch" style="left:1504px;width:87px;color:#1f1f1f">K</span><div class="chl" style="left:1591px"></div><span class="ch" style="left:1592px;width:87px;color:#1f1f1f">L</span><div class="chl" style="left:1679px"></div><span class="ch" style="left:1680px;width:87px;color:#1f1f1f">M</span><div class="chl" style="left:1767px"></div><span class="ch" style="left:1768px;width:87px;color:#1f1f1f">N</span><div class="chl" style="left:1855px"></div></div><div id="rowhdr"><div class="rh" style="top:0;height:59px;background:linear-gradient(90deg,#c4c4c4,#a4a4a4) bottom/100% 1px no-repeat,#d3d3d3;color:#1e6b41;line-height:90px">1</div><div class="rh" style="top:59px">2</div><div class="rh" style="top:89px">3</div><div class="rh" style="top:119px">4</div><div class="rh" style="top:149px">5</div><div class="rh" style="top:179px">6</div><div class="rh" style="top:209px">7</div><div class="rh" style="top:239px">8</div><div class="rh" style="top:269px">9</div><div class="rh" style="top:299px">10</div><div class="rh" style="top:329px">11</div><div class="rh" style="top:359px">12</div><div class="rh" style="top:389px">13</div><div class="rh" style="top:419px">14</div><div class="rh" style="top:449px">15</div><div class="rh" style="top:479px">16</div><div class="rh" style="top:509px">17</div><div class="rh" style="top:539px">18</div><div class="rh" style="top:569px">19</div><div class="rh" style="top:599px">20</div><div class="rh" style="top:629px">21</div><div class="rh" style="top:659px">22</div><div class="rh" style="top:689px">23</div><div class="rh" style="top:719px">24</div><div class="rh" style="top:749px">25</div><div class="rh" style="top:779px">26</div><div class="rh" style="top:809px">27</div></div><div style="left:35px;top:28px;width:89px;height:62px;border:2px solid #0e6a38"></div><div style="left:37px;top:30px;width:85px;height:58px;border:1px solid #fff"></div><div style="left:120px;top:86px;width:5px;height:5px;background:#1a7443;box-shadow:0 0 0 1px #fff"></div><div style="left:126px;top:30px;width:32px;height:32px;border-radius:5.5px;background:#fff;border:1px solid #6e6e6e;box-shadow:0 5px 8px rgba(0,0,0,.2)"></div><svg style="left:130px;top:34px" width="24" height="24" viewBox="130 132 24 24">
<defs>
<linearGradient id="cg2" x1="0" y1="0" x2="0" y2="1"><stop offset="0" stop-color="#2e95e6"/><stop offset=".38" stop-color="#2f8fdc"/><stop offset=".55" stop-color="#3aa68e"/><stop offset=".78" stop-color="#a9c634"/><stop offset="1" stop-color="#dcc529"/></linearGradient>
<linearGradient id="cg3" x1="0" y1="0" x2="0" y2="1"><stop offset="0" stop-color="#a852e4"/><stop offset=".3" stop-color="#c452cf"/><stop offset=".55" stop-color="#ee6591"/><stop offset=".8" stop-color="#f4807a"/><stop offset="1" stop-color="#f9a94f"/></linearGradient>
</defs>
<path d="M137.2 134.8 H144 C146 134.8 147 136 147.6 138 L148.2 140.4 H143.8 C142.5 140.4 141.7 141 141.3 142.4 L139.9 146.7 C139.5 147.9 138.7 148.5 137.5 148.5 H135.5 C133.6 148.5 132.8 147.1 133.3 145.2 L135.2 137.5 C135.6 135.7 136.2 134.8 137.2 134.8 Z" fill="url(#cg2)"/>
<path d="M141.8 134.8 H144 C146 134.8 147 136 147.6 138 L148.2 140.4 H143.8 C143 140.4 142.4 140.7 142 141.2 L141.4 138.4 C141.2 137.4 141.2 135.8 141.8 134.8 Z" fill="#1a5cc2"/>
<path d="M145.3 140.3 H148.8 C150.8 140.3 151.6 141.7 151.1 143.5 L149.2 150.4 C148.7 152.2 148 152.9 146.4 152.9 H141 C139.2 152.9 138 151.7 138 150.3 C138 149 139 148 140.4 148 H141.6 C142.6 148 143.2 147.4 143.5 146.4 L144.6 142 C144.8 141 145 140.5 145.3 140.3 Z" fill="url(#cg3)"/>
<circle cx="140.3" cy="150.3" r="2.5" fill="#f4512e"/>
</svg>
</div>
<div id="vsb"><div style="left:3px;top:1px;width:21px;height:857px;border-radius:10.5px;background:#f3f3f3"></div><svg style="left:6px;top:5px" width="14" height="10" viewBox="1900 103 14 10"><path d="M1907.6 104.6 L1913 111.6 H1902.2 Z" fill="#707070" stroke="#707070" stroke-width="1" stroke-linejoin="round"/></svg><div style="left:8px;top:21px;width:11px;height:21px;border-radius:5.5px;background:#707070"></div><svg style="left:6px;top:842px" width="14" height="10" viewBox="1900 940 14 10"><path d="M1902.2 942 H1913 L1907.6 949 Z" fill="#707070" stroke="#707070" stroke-width="1" stroke-linejoin="round"/></svg></div>
<div id="bot"><svg style="left:28px;top:10px" width="60" height="20" viewBox="28 963 60 20" fill="none" stroke="#a6a6a6" stroke-width="1.4"><path d="M39 965.6 L32.6 972 L39 978.4"/><path d="M73 965.6 L79.4 972 L73 978.4"/></svg><div style="left:140.6px;top:0;width:61.4px;height:35px;background:#fff;border-radius:0 0 5px 5px;box-shadow:0 0 1px rgba(0,0,0,.25)"></div><div style="left:137.6px;top:0;width:3px;height:3px;background:radial-gradient(circle at 0 100%,#e4e8f0 2.7px,#fff 3.3px)"></div><div style="left:202px;top:0;width:3px;height:3px;background:radial-gradient(circle at 100% 100%,#e4e8f0 2.7px,#fff 3.3px)"></div><div style="left:137px;top:-1px;width:69px;height:1px;background:#fff"></div><span class="t " style="left:152.72px;top:7.3px;transform:scaleX(1.0347);font-size:18.4px;color:#303030">data</span><div style="left:151px;top:30px;width:41px;height:2px;background:#107c41"></div><div style="left:207px;top:8px;width:1px;height:24px;background:#c9c9c9"></div><span class="t " style="left:225.06px;top:11.8px;transform:scaleX(1.0773);font-size:18.4px;color:#303030">pivot</span><div style="left:284px;top:8px;width:1px;height:24px;background:#c6c6c6"></div><svg style="left:336px;top:11px" width="18" height="18" viewBox="336 964 18 18" stroke="#333" stroke-width="1.5"><path d="M337.6 972.4 H351.6 M344.6 965.4 V979.4"/></svg><div style="left:1154.5px;top:14px;width:3px;height:3px;border-radius:1.5px;background:#333"></div><div style="left:1154.5px;top:19px;width:3px;height:3px;border-radius:1.5px;background:#333"></div><div style="left:1154.5px;top:24px;width:3px;height:3px;border-radius:1.5px;background:#333"></div><div style="left:1176px;top:9px;width:721px;height:21px;border-radius:10.5px;background:#f3f3f3"></div><svg style="left:1180px;top:13px" width="12" height="14" viewBox="1180 966 12 14"><path d="M1190.6 967.6 V977.6 L1182.6 972.6 Z" fill="#707070" stroke="#707070" stroke-width="1" stroke-linejoin="round"/></svg><div style="left:1197px;top:14px;width:660px;height:11px;border-radius:5.5px;background:#707070"></div><svg style="left:1881px;top:13px" width="12" height="14" viewBox="1881 966 12 14"><path d="M1883 967.6 V977.6 L1890.6 972.6 Z" fill="#707070" stroke="#707070" stroke-width="1" stroke-linejoin="round"/></svg></div>
</body></html>
